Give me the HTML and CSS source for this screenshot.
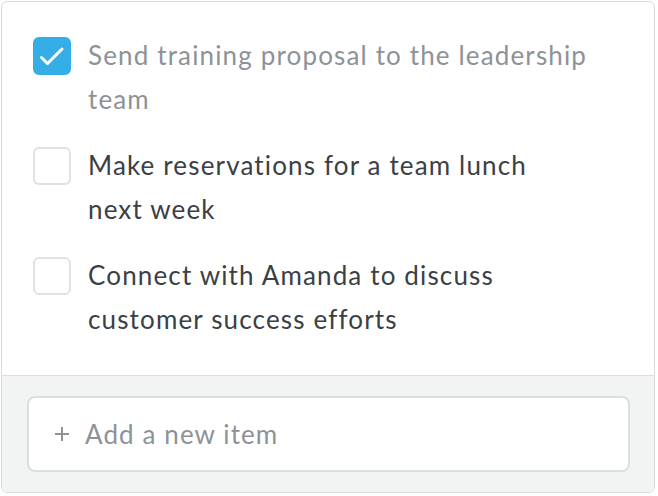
FILE: index.html
```html
<!DOCTYPE html>
<html>
<head>
<meta charset="utf-8">
<link rel="stylesheet" href="styles.css">
</head>
<body>
<div class="card">
  <ul class="list">
    <li class="item done">
      <span class="box checked">
        <svg width="36" height="36" viewBox="0 0 36 36"><path d="M7.5 19.5 L13.5 25.5 L28 11" fill="none" stroke="#fff" stroke-width="3" stroke-linecap="round" stroke-linejoin="round"/></svg>
      </span>
      <span class="label">Send training proposal to the leadership<br>team</span>
    </li>
    <li class="item">
      <span class="box"></span>
      <span class="label">Make reservations for a team lunch<br>next week</span>
    </li>
    <li class="item">
      <span class="box"></span>
      <span class="label">Connect with Amanda to discuss<br>customer success efforts</span>
    </li>
  </ul>
  <div class="footer">
    <div class="add">
      <svg class="plus" width="16" height="16" viewBox="0 0 16 16"><path d="M8 1 V15 M1 8 H15" stroke="#8d9297" stroke-width="2"/></svg>
      <span class="add-text">Add a new item</span>
    </div>
  </div>
</div>
</body>
</html>
```
FILE: styles.css
```css
html, body {
  margin: 0;
  padding: 0;
  background: #ffffff;
}
body {
  padding: 1px 0 0 1px;
  font-family: Lato, "Open Sans", sans-serif;
}
.card {
  width: 654px;
  height: 492px;
  box-sizing: border-box;
  border: 1px solid #d9dbdc;
  border-radius: 6px;
  overflow: hidden;
  display: flex;
  flex-direction: column;
  background: #fff;
}
.list {
  list-style: none;
  margin: 0;
  padding: 31px 10px 34px 31px;
  display: flex;
  flex-direction: column;
  gap: 22px;
}
.item {
  display: flex;
  align-items: flex-start;
  gap: 17px;
}
.box {
  flex: none;
  width: 34px;
  height: 34px;
  margin-top: 4px;
  border: 2px solid #dfe1e3;
  border-radius: 6px;
  background: #fff;
  position: relative;
}
.box.checked {
  background: #35aee8;
  border-color: #35aee8;
}
.box svg {
  position: absolute;
  left: -1px;
  top: -1px;
}
.label {
  font-size: 26px;
  letter-spacing: 1.15px;
  line-height: 44px;
  color: #3b4045;
}
.done .label {
  color: #8d9297;
}
.footer {
  flex: 1;
  background: #f2f3f3;
  border-top: 1px solid #dcdedf;
  padding: 20px 24px 0 25px;
}
.add {
  height: 76px;
  box-sizing: border-box;
  border: 2px solid #dcdedf;
  border-radius: 8px;
  background: #fff;
  display: flex;
  align-items: center;
  padding-left: 25px;
  gap: 15px;
  color: #8d9297;
}
.plus {
  flex: none;
}
.add-text {
  font-size: 26px;
  letter-spacing: 1.1px;
  line-height: 44px;
}
```
